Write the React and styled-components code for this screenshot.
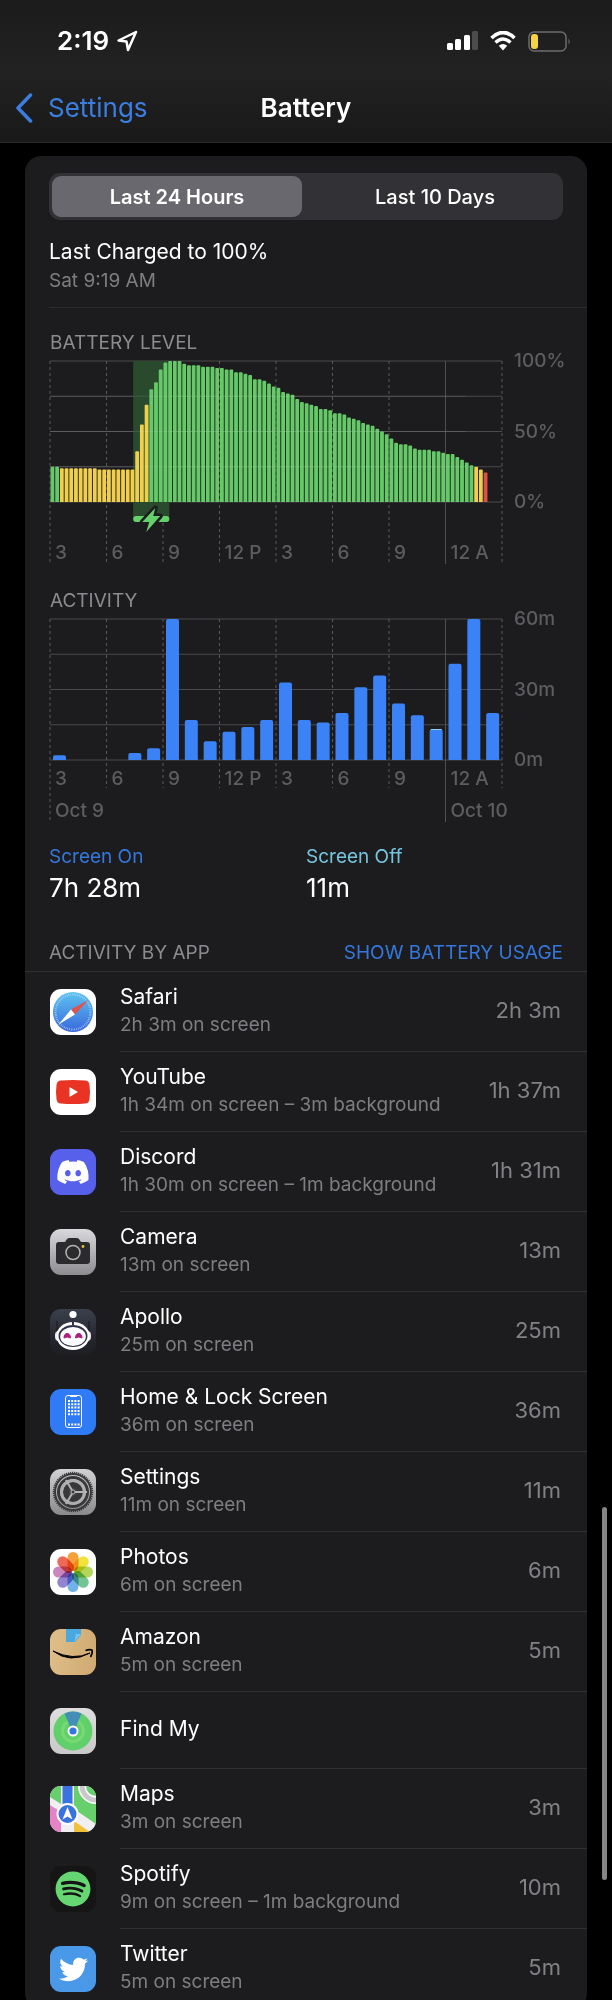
import styled, { createGlobalStyle } from "styled-components";
import { FaDiscord, FaSpotify, FaTwitter } from "react-icons/fa";

const GlobalStyle = createGlobalStyle`
  * {
    box-sizing: border-box;
  }
  body {
    margin: 0;
    background-color: black;
    color: white;
    font-family: Inter, "Liberation Sans", sans-serif;
  }
  button {
    border: 0;
    padding: 0;
    background: none;
    color: inherit;
    font: inherit;
  }
`;

const Screen = styled.div`
  display: flex;
  flex-direction: column;
  height: 100vh;
  position: relative;
  overflow: hidden;
`;

const Header = styled.header`
  background-image: linear-gradient(#1b1b1b, #222222 50%, #191919);
  border-bottom: 1px solid #2a2a2a;
`;

const StatusBar = styled.div`
  display: flex;
  justify-content: space-between;
  align-items: center;
  height: 80px;
  padding: 2px 41px 0 57px;
`;

const StatusGroup = styled.div`
  display: flex;
  align-items: center;
  gap: ${(props) => props.$gap};
`;

const Clock = styled.span`
  font-size: 26px;
  line-height: 30px;
  font-weight: 600;
`;

const NavBar = styled.nav`
  display: grid;
  grid-template-columns: 1fr auto 1fr;
  align-items: center;
  height: 62px;
  padding: 0 15px 6px;
`;

const BackLink = styled.a`
  display: flex;
  align-items: center;
  gap: 15px;
  color: #3b7ee0;
  font-size: 26px;
  line-height: 32px;
  text-decoration: none;
`;

const Title = styled.h1`
  margin: 0;
  font-size: 26px;
  line-height: 32px;
  font-weight: 600;
`;

const Content = styled.main`
  flex: 1;
  min-height: 0;
  padding: 13px 25px 0;
  overflow-y: auto;
  scrollbar-width: none;
`;

const ScrollThumb = styled.div`
  position: absolute;
  top: 1507px;
  right: 5px;
  width: 5px;
  height: 373px;
  border-radius: 3px;
  background-color: #858587;
`;

const Card = styled.div`
  background-color: #1c1c1e;
  border-radius: 16px;
  padding-top: 17px;
`;

const Segmented = styled.div`
  display: flex;
  gap: 8px;
  margin: 0 24px;
  height: 47px;
  padding: 3px;
  border-radius: 11px;
  background-color: #323236;
`;

const Segment = styled.button`
  flex: 1;
  border-radius: 9px;
  font-size: 20px;
  font-weight: ${(props) => (props.$active ? 600 : 500)};
  background-color: ${(props) => (props.$active ? "#69686e" : "transparent")};
`;

const LastCharged = styled.div`
  display: grid;
  gap: 1px;
  margin-left: 24px;
  padding: 17px 0 13px;
  border-bottom: 1px solid #2b2b2e;
`;

const Primary = styled.div`
  font-size: 21px;
  line-height: 30px;
`;

const Secondary = styled.div`
  color: #7e7e82;
  font-size: 19px;
  line-height: 26px;
`;

const ChartSection = styled.section`
  padding: ${(props) => props.$top} 0 0 25px;
`;

const ChartTitle = styled.h2`
  margin: 0;
  color: #8c8c90;
  font-size: 19px;
  line-height: 26px;
  font-weight: 400;
`;

const ChartBody = styled.div`
  display: flex;
  align-items: flex-start;
  gap: 12px;
  padding-top: 5px;
`;

const Plot = styled.svg`
  flex: 1;
  min-width: 0;
  height: 203px;
  overflow: visible;
  fill: #5d5d61;
  font-size: 19px;
  font-weight: 500;
`;

const Scale = styled.div`
  display: flex;
  flex-direction: column;
  justify-content: space-between;
  width: 73px;
  height: 165px;
  margin-top: -12px;
  color: #5d5d61;
  font-size: 19px;
  line-height: 24px;
  font-weight: 500;
`;

const Totals = styled.dl`
  display: grid;
  grid-template-columns: 1fr 1fr;
  margin: 0;
  padding: 22px 24px 0;
`;

const TotalName = styled.dt`
  color: ${(props) => props.color};
  font-size: 19px;
  line-height: 26px;
`;

const TotalValue = styled.dd`
  margin: 0;
  font-size: 26px;
  line-height: 36px;
`;

const ListHeader = styled.div`
  display: flex;
  justify-content: space-between;
  padding: 34px 24px 5px;
  border-bottom: 1px solid #303033;
`;

const UsageButton = styled.button`
  color: #3478dd;
  font-size: 19px;
  line-height: 26px;
`;

const AppList = styled.ul`
  margin: 0;
  padding: 0;
  list-style: none;
`;

const AppRow = styled.li`
  display: flex;
  align-items: center;
  gap: 24px;
  padding-left: 25px;
`;

const AppIcon = styled.svg`
  flex: none;
  width: 46px;
  height: 46px;
  border-radius: 11px;
  background: ${(props) => props.$bg};
`;

const AppInfo = styled.div`
  flex: 1;
  display: flex;
  align-items: center;
  justify-content: space-between;
  min-height: 77px;
  padding: 10px 26px 13px 0;
  border-bottom: 1px solid #303033;
`;

const AppTime = styled.span`
  color: #828286;
  font-size: 22px;
  line-height: 28px;
`;

const BATTERY = [
  25, 25, 24, 24, 24, 24, 24, 24, 24, 24, 23, 23, 23, 23, 23, 23, 23, 23, 36,
  55, 69, 80, 85, 94, 99, 100, 100, 100, 98, 97, 97, 97, 96, 96, 96, 95, 95, 94,
  94, 92, 92, 91, 90, 87, 87, 86, 84, 82, 81, 78, 77, 76, 73, 71, 70, 69, 68, 66,
  66, 65, 63, 63, 62, 60, 59, 58, 56, 55, 54, 52, 50, 48, 45, 42, 41, 41, 40, 38,
  37, 37, 37, 36, 36, 35, 34, 34, 32, 30, 28, 26, 25, 23, 21,
];

const ACTIVITY = [
  2, 0, 0, 0, 3, 5, 60, 17, 8, 12, 14, 17, 33, 17, 16, 20, 31, 36, 24, 19, 13,
  41, 60, 20,
];

const HOURS = ["3", "6", "9", "12 P", "3", "6", "9", "12 A"];
const PLOT_HEIGHT = 141;

const barColor = (index) => {
  if (index === 92) return "#dd5045";
  if ((index > 1 && index < 21) || index > 89) return "#f0cf4c";
  return "#65c968";
};

const barPath = (height, width, radius) =>
  `M0 ${PLOT_HEIGHT}v${-height + radius}q0 ${-radius} ${radius} ${-radius}h${
    width - 2 * radius
  }q${radius} 0 ${radius} ${radius}v${height - radius}z`;

function Grid({ bottom, labelY, dates }) {
  return (
    <g>
      {[0, 1, 2, 3, 4].map((n) => (
        <line
          key={n}
          x1="0"
          x2="100%"
          y1={n * 35.25}
          y2={n * 35.25}
          stroke="#4a4a4d"
        />
      ))}
      {[...HOURS, ""].map((hour, n) => {
        const midnight = n === 7;
        const end = dates && n === 0 ? 201 : bottom;
        return (
          <g key={n}>
            <line
              x1={`${n * 12.5}%`}
              x2={`${n * 12.5}%`}
              y1="0"
              y2={midnight ? 203 : end}
              stroke={midnight ? "#4f4f52" : "#58585b"}
              strokeDasharray={midnight ? "none" : "3 3"}
            />
            <text x={`${n * 12.5}%`} dx="5" y={labelY}>
              {hour}
            </text>
          </g>
        );
      })}
      {dates && (
        <>
          <text x="0" dx="5" y="198">
            Oct 9
          </text>
          <text x="87.5%" dx="5" y="198">
            Oct 10
          </text>
        </>
      )}
    </g>
  );
}

function BatteryChart() {
  return (
    <ChartSection $top="22px">
      <ChartTitle>BATTERY LEVEL</ChartTitle>
      <ChartBody>
        <Plot>
          <Grid bottom={201} labelY={198} />
          <rect x="18.4%" y="0" width="8%" height="158" fill="#2a4a2e" />
          {BATTERY.map((level, i) => (
            <svg key={i} x={`${(i * 100) / 96}%`} overflow="visible">
              <path
                d={barPath((level / 100) * PLOT_HEIGHT, 3.8, 1)}
                transform="translate(0.5 0)"
                fill={barColor(i)}
              />
            </svg>
          ))}
          <rect
            x="18.4%"
            y="155"
            width="8%"
            height="6"
            rx="3"
            fill="#65d16b"
          />
          <svg x="22.4%" y="158" overflow="visible">
            <path
              d="M4 -11L-9 3h7l-3 10L9 -3H2z"
              fill="#65d16b"
              stroke="#1c1c1e"
              strokeWidth="5"
              strokeLinejoin="round"
              paintOrder="stroke"
            />
          </svg>
          {[1, 2, 3].map((n) => (
            <line
              key={n}
              x1="0"
              x2="92%"
              y1={n * 35.25}
              y2={n * 35.25}
              stroke="rgba(255, 255, 255, 0.1)"
            />
          ))}
        </Plot>
        <Scale>
          <span>100%</span>
          <span>50%</span>
          <span>0%</span>
        </Scale>
      </ChartBody>
    </ChartSection>
  );
}

function ActivityChart() {
  return (
    <ChartSection $top="24px">
      <ChartTitle>ACTIVITY</ChartTitle>
      <ChartBody>
        <Plot>
          <Grid bottom={169} labelY={166} dates />
          {ACTIVITY.map((minutes, i) =>
            minutes ? (
              <svg key={i} x={`${(i * 100) / 24}%`} overflow="visible">
                <path
                  d={barPath((minutes / 60) * PLOT_HEIGHT, 13, 2)}
                  transform="translate(3 0)"
                  fill="#3b82f6"
                />
                {i === 20 && (
                  <rect x="4" y="110" width="11" height="1" fill="#8fd0f0" />
                )}
              </svg>
            ) : null
          )}
        </Plot>
        <Scale>
          <span>60m</span>
          <span>30m</span>
          <span>0m</span>
        </Scale>
      </ChartBody>
    </ChartSection>
  );
}

const PETALS = [
  "#f5a13c",
  "#f2e23c",
  "#b5d65a",
  "#74c493",
  "#72b2ea",
  "#9384d2",
  "#cb86bd",
  "#ee6a58",
];

const APPS = [
  {
    name: "Safari",
    detail: "2h 3m on screen",
    time: "2h 3m",
    bg: "white",
    art: (
      <>
        <defs>
          <linearGradient id="safari" x2="0" y2="1">
            <stop stopColor="#5cc4f0" />
            <stop offset="1" stopColor="#3a68dc" />
          </linearGradient>
        </defs>
        <circle cx="23" cy="23" r="20" fill="url(#safari)" />
        <circle
          cx="23"
          cy="23"
          r="17.5"
          fill="none"
          stroke="#b9ddf7"
          strokeWidth="2"
          strokeDasharray="0.6 1.2"
        />
        <path d="M38.5 11L21 20.5l4 5z" fill="#e0524c" />
        <path d="M8.5 35.5L21 20.5l4 5z" fill="white" />
      </>
    ),
  },
  {
    name: "YouTube",
    detail: "1h 34m on screen – 3m background",
    time: "1h 37m",
    bg: "white",
    art: (
      <>
        <path
          d="M11 11.5q12-1 24 0q4 0 4.5 4.5q1 7 0 14q-.5 4.5-4.5 4.5q-12 1-24 0q-4 0-4.5-4.5q-1-7 0-14q.5-4.5 4.5-4.5z"
          fill="#e93323"
        />
        <path d="M19.5 18v10l8.5-5z" fill="white" />
      </>
    ),
  },
  {
    name: "Discord",
    detail: "1h 30m on screen – 1m background",
    time: "1h 31m",
    bg: "#5660ea",
    art: <FaDiscord x="6" y="6" size={34} color="white" />,
  },
  {
    name: "Camera",
    detail: "13m on screen",
    time: "13m",
    bg: "linear-gradient(#d9d9dd, #8d8d91)",
    art: (
      <>
        <path
          d="M9 13h5q1.5 0 2-1.5q1-2.5 3-2.5h8q2 0 3 2.5q.5 1.5 2 1.5h5q3 0 3 3v16q0 3-3 3H9q-3 0-3-3V16q0-3 3-3z"
          fill="#2b2b2d"
        />
        <circle
          cx="23"
          cy="23.5"
          r="7"
          fill="none"
          stroke="#b4b4b8"
          strokeWidth="1.5"
        />
        <circle cx="33" cy="17.5" r="1.4" fill="#e8bf3c" />
      </>
    ),
  },
  {
    name: "Apollo",
    detail: "25m on screen",
    time: "25m",
    bg: "linear-gradient(#3a404c, #22232a 75%, #1e1e22)",
    art: (
      <>
        <path d="M7 12v12M39 12v12" stroke="#16171c" />
        <circle cx="23" cy="5.5" r="3.6" fill="white" />
        <rect x="5" y="22" width="36" height="10" rx="4" fill="#e6e6ee" />
        <ellipse cx="23" cy="27" rx="16.5" ry="14" fill="white" />
        <path d="M23 9v7" stroke="#30354a" strokeWidth="2" />
        <ellipse cx="23" cy="27" rx="14.5" ry="11" fill="#30344a" />
        <ellipse cx="23" cy="27.5" rx="12.8" ry="9.5" fill="white" />
        <path
          d="M14 29q0-4.500 3.200-4.500t3.200 4.500q-3.200-2-6.400 0zM25.600 29q0-4.500 3.200-4.500t3.200 4.500q-3.200-2-6.400 0z"
          fill="#ad1f7c"
          stroke="#ad1f7c"
        />
      </>
    ),
  },
  {
    name: "Home & Lock Screen",
    detail: "36m on screen",
    time: "36m",
    bg: "#2f7bf5",
    art: (
      <>
        <rect
          x="15.5"
          y="6.5"
          width="16"
          height="32"
          rx="2.5"
          fill="none"
          stroke="white"
        />
        <path d="M20 7h7" stroke="white" strokeWidth="2" />
        <path
          d="M18 12h12M18 15.3h12M18 18.6h12M18 21.9h12M18 25.2h12M18 35.5h12"
          stroke="white"
          strokeWidth="2"
          strokeDasharray="2 1.2"
        />
      </>
    ),
  },
  {
    name: "Settings",
    detail: "11m on screen",
    time: "11m",
    bg: "linear-gradient(#d2d2d4, #8a8a8c)",
    art: (
      <g fill="none" stroke="#38383a">
        <circle cx="23" cy="23" r="18" strokeWidth="2" />
        <circle
          cx="23"
          cy="23"
          r="19.5"
          strokeWidth="1.5"
          strokeDasharray="1.2 0.9"
        />
        <circle cx="23" cy="23" r="14.5" strokeWidth="3" />
        <circle cx="23" cy="23" r="7" fill="#454547" strokeWidth="6" />
        <circle cx="23" cy="23" r="11.5" stroke="#aeaeb0" strokeWidth="2.5" />
        {[0, 120, 240].map((angle) => (
          <path
            key={angle}
            d="M23 23h14"
            stroke="#b2b2b4"
            strokeWidth="2"
            transform={`rotate(${angle} 23 23)`}
          />
        ))}
        <circle cx="23" cy="23" r="2" fill="#38383a" stroke="#b2b2b4" />
      </g>
    ),
  },
  {
    name: "Photos",
    detail: "6m on screen",
    time: "6m",
    bg: "white",
    art: PETALS.map((color, i) => (
      <rect
        key={color}
        x="17.5"
        y="3"
        width="11"
        height="19"
        rx="5.5"
        fill={color}
        transform={`rotate(${i * 45} 23 23)`}
        style={{ mixBlendMode: "multiply" }}
      />
    )),
  },
  {
    name: "Amazon",
    detail: "5m on screen",
    time: "5m",
    bg: "linear-gradient(100deg, #e0bf8a, #cfa970)",
    art: (
      <>
        <path d="M16 0h15v6l-6 7h-9z" fill="#4ba8df" />
        <path d="M31 5h-5q-1 5-2 8z" fill="#74c6f0" />
        <path d="M3 22q17 13 37 2q-17 8-37-2z" fill="black" stroke="black" />
        <path
          d="M35.5 21.5q4-1.5 6.500-.5q1 3-1.500 7"
          fill="none"
          stroke="black"
          strokeWidth="1.6"
        />
      </>
    ),
  },
  {
    name: "Find My",
    bg: "linear-gradient(#dedede, #c9c9c9)",
    art: (
      <>
        <circle cx="23" cy="23" r="19.5" fill="#61d06b" />
        <circle
          cx="23"
          cy="23"
          r="10.5"
          fill="none"
          stroke="#78d973"
          strokeWidth="3"
        />
        <path d="M14.5 5.5q8.500-4 17 0L25 21h-4z" fill="#438fb8" />
        <circle cx="23" cy="23" r="5.5" fill="white" />
        <circle cx="23" cy="23" r="3.6" fill="#3477e3" />
      </>
    ),
  },
  {
    name: "Maps",
    detail: "3m on screen",
    time: "3m",
    bg: "#f0f0f3",
    art: (
      <>
        <path d="M0 0h11v18L0 11z" fill="#67cf6c" />
        <path d="M24 0h22v38L24 23z" fill="#67cf6c" />
        <circle
          cx="46"
          cy="0"
          r="14"
          fill="none"
          stroke="white"
          strokeWidth="8"
        />
        <circle
          cx="46"
          cy="0"
          r="14"
          fill="none"
          stroke="#c9c9cd"
          strokeWidth="5"
        />
        <path d="M0 19l11 7v20H0z" fill="#e583c6" />
        <path d="M24 35l16 11H24z" fill="#f2c13c" />
        <rect x="12.5" width="10" height="22" fill="#3a72de" />
        <circle
          cx="17.5"
          cy="28"
          r="10"
          fill="#3a72de"
          stroke="white"
          strokeWidth="2"
        />
        <path d="M17.5 21l5 12.500-5-3-5 3z" fill="white" />
      </>
    ),
  },
  {
    name: "Spotify",
    detail: "9m on screen – 1m background",
    time: "10m",
    bg: "#151515",
    art: <FaSpotify x="5" y="5" size={36} color="#66d672" />,
  },
  {
    name: "Twitter",
    detail: "5m on screen",
    time: "5m",
    bg: "#4a99e9",
    art: <FaTwitter x="9" y="9" size={29} color="white" />,
  },
];

function StatusIcons() {
  return (
    <StatusGroup $gap="12px">
      <svg width="31" height="20">
        <rect y="12" width="6" height="7" rx="1.5" fill="white" />
        <rect x="8" y="8" width="6" height="11" rx="1.5" fill="white" />
        <rect x="17" y="4" width="6" height="15" rx="1.5" fill="white" />
        <rect x="25" width="6" height="19" rx="1.5" fill="#4c4c4c" />
      </svg>
      <svg width="26" height="20" fill="none" stroke="white">
        <path d="M1.5 7q11.500-11 23 0" strokeWidth="3.6" />
        <path d="M5.5 11.5q7.500-7 15 0" strokeWidth="3.4" />
        <path
          d="M8.8 14.8q4.200-3.600 8.400 0l-4.200 4.700z"
          fill="white"
          stroke="none"
        />
      </svg>
      <svg width="43" height="21">
        <rect
          x="1"
          y="1"
          width="37"
          height="19"
          rx="5"
          fill="none"
          stroke="#6c6c6c"
          strokeWidth="1.5"
        />
        <rect x="3" y="3" width="7" height="15" rx="3" fill="#f4d345" />
        <path d="M40.5 7.5q2.500 3 0 6z" fill="#6c6c6c" />
      </svg>
    </StatusGroup>
  );
}

export default function App() {
  return (
    <Screen>
      <GlobalStyle />
      <Header>
        <StatusBar>
          <StatusGroup $gap="7px">
            <Clock>2:19</Clock>
            <svg width="22" height="22" fill="none" stroke="white">
              <path
                d="M20 2L2.500 10.500l8 1L12 20z"
                strokeWidth="2.5"
                strokeLinejoin="round"
              />
            </svg>
          </StatusGroup>
          <StatusIcons />
        </StatusBar>
        <NavBar>
          <BackLink href="#settings">
            <svg width="18" height="30" fill="none" stroke="currentColor">
              <path
                d="M15.5 2L3 15l12.500 13"
                strokeWidth="3.5"
                strokeLinecap="round"
                strokeLinejoin="round"
              />
            </svg>
            Settings
          </BackLink>
          <Title>Battery</Title>
        </NavBar>
      </Header>
      <Content>
        <Card>
          <Segmented>
            <Segment $active>Last 24 Hours</Segment>
            <Segment>Last 10 Days</Segment>
          </Segmented>
          <LastCharged>
            <Primary>Last Charged to 100%</Primary>
            <Secondary>Sat 9:19 AM</Secondary>
          </LastCharged>
          <BatteryChart />
          <ActivityChart />
          <Totals>
            <div>
              <TotalName color="#3478dd">Screen On</TotalName>
              <TotalValue>7h 28m</TotalValue>
            </div>
            <div>
              <TotalName color="#76c5df">Screen Off</TotalName>
              <TotalValue>11m</TotalValue>
            </div>
          </Totals>
          <ListHeader>
            <ChartTitle>ACTIVITY BY APP</ChartTitle>
            <UsageButton>SHOW BATTERY USAGE</UsageButton>
          </ListHeader>
          <AppList>
            {APPS.map((app) => (
              <AppRow key={app.name}>
                <AppIcon viewBox="0 0 46 46" $bg={app.bg}>
                  {app.art}
                </AppIcon>
                <AppInfo>
                  <div>
                    <Primary>{app.name}</Primary>
                    {app.detail && <Secondary>{app.detail}</Secondary>}
                  </div>
                  {app.time && <AppTime>{app.time}</AppTime>}
                </AppInfo>
              </AppRow>
            ))}
          </AppList>
        </Card>
      </Content>
      <ScrollThumb />
    </Screen>
  );
}
